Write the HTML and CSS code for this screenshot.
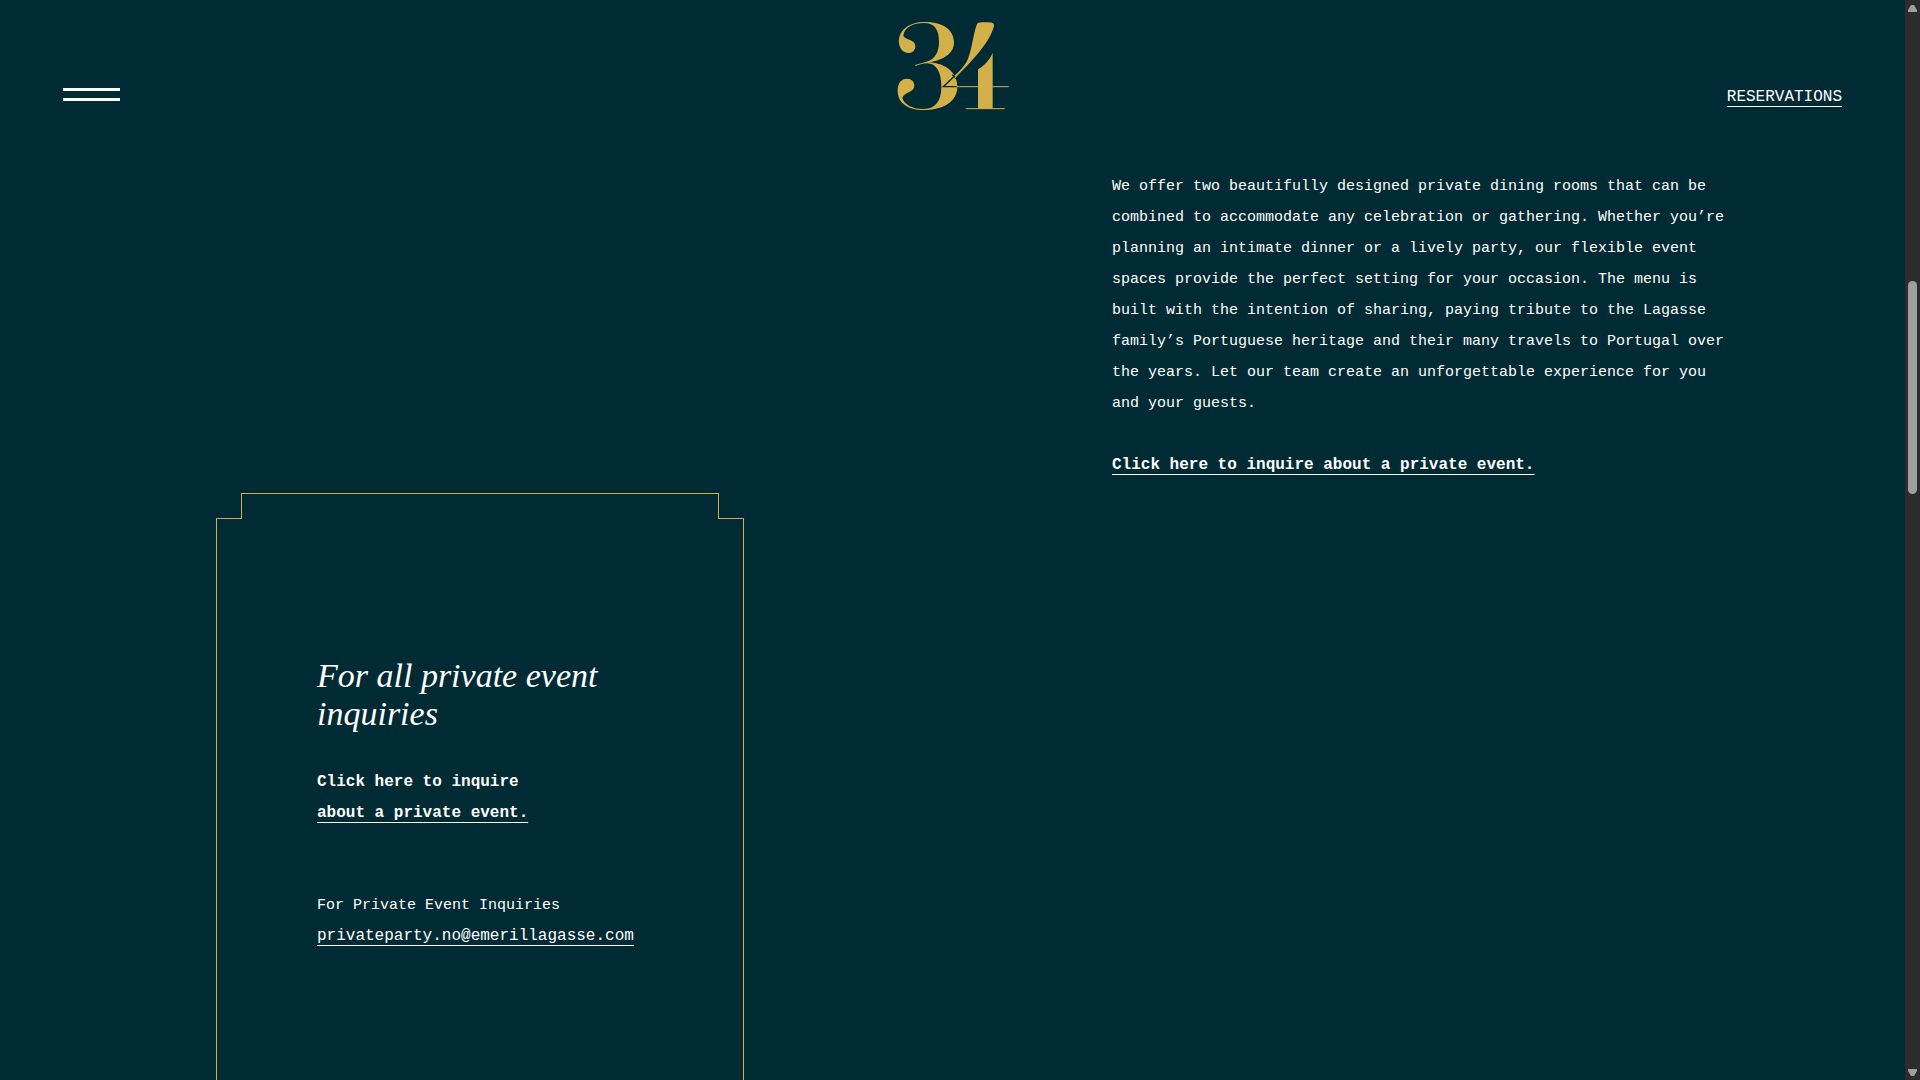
FILE: index.html
```html
<!DOCTYPE html>
<html lang="en">
<head>
    <meta charset="UTF-8">
    <meta name="viewport" content="width=device-width, initial-scale=1.0">
    <title>Private Events</title>
    <link rel="stylesheet" href="styles.css">
</head>
<body>
    <div class="page">
        <header class="header">
            <button class="menu-button" type="button" aria-label="Menu">
                <span class="menu-line"></span>
                <span class="menu-line"></span>
            </button>
            <a class="logo" href="#" aria-label="Home">
                <svg width="112" height="91" viewBox="51 30 336 273">
                    <!-- figure three -->
                    <path class="gold" d="M57 100C53 60 90 36 132 36C188 36 222 58 222 98C222 130 190 150 146 157C200 160 232 190 232 230C232 275 190 300 128 300C85 300 53 280 53 243C53 220 62 206 82 206C95 206 103 215 103 227C103 247 72 246 67 264C72 282 95 297 128 297C165 297 184 275 184 230C184 185 168 160 142 160C129 160 118 164 106 168L105 165L140 155C165 147 177 127 177 95C177 60 165 39 132 39C100 39 72 52 70 78C76 90 106 88 106 108C106 122 96 129 86 129C68 129 59 115 57 100Z"/>
                    <!-- figure four -->
                    <path class="cut" d="M226 196L190 230H232"/>
                    <path class="gold" d="M290 45C292 37 300 37 318 37C338 37 343 39 342 48C334 84 300 126 264 164L226 203L222 199C240 182 257 164 264 146C277 112 279 75 290 45Z"/>
                    <path class="cut" d="M217 194L231 208"/>
                    <path class="hairline" d="M230 199L218 210"/>
                    <path class="gold" d="M294 178C315 165 330 148 338 128V296H294Z"/>
                    <path class="hairline" d="M230 230H386M257 296H374"/>
                </svg>
            </a>
            <a class="link reservations" href="#">RESERVATIONS</a>
        </header>

        <main class="events">
            <section class="card">
                <div class="card-cap"></div>
                <div class="card-body">
                    <h2>For all private event inquiries</h2>
                    <p class="card-link"><a class="strong" href="#">Click here to inquire<br><span class="link">about a private event.</span></a></p>
                    <p>For Private Event Inquiries</p>
                    <p><a class="link" href="mailto:privateparty.no@emerillagasse.com">privateparty.no@emerillagasse.com</a></p>
                </div>
            </section>
            <section class="intro">
                <p>We offer two beautifully designed private dining rooms that can be combined to accommodate any celebration or gathering. Whether you’re planning an intimate dinner or a lively party, our flexible event spaces provide the perfect setting for your occasion. The menu is built with the intention of sharing, paying tribute to the Lagasse family’s Portuguese heritage and their many travels to Portugal over the years. Let our team create an unforgettable experience for you and your guests.</p>
                <p><a class="link strong" href="#">Click here to inquire about a private event.</a></p>
            </section>
        </main>
    </div>

    <div class="scrollbar">
        <svg width="9" height="7" viewBox="0 0 9 7"><path d="M3 0H6L9 5V7H0V5Z"/></svg>
        <div class="thumb"></div>
        <svg width="9" height="7" viewBox="0 0 9 7"><path d="M0 0H9V2L6 7H3L0 2Z"/></svg>
    </div>
</body>
</html>
```

FILE: styles.css
```css
* {
    box-sizing: border-box;
}
body {
    margin: 0;
    height: 100vh;
    display: flex;
    overflow: hidden;
    background-color: #002b34;
    color: #fff;
    font-family: "Liberation Mono", "Courier New", monospace;
    font-size: 15px;
    line-height: 31px;
}
h2, p {
    margin: 0;
}
a {
    color: inherit;
    font-size: 16px;
    text-decoration: none;
}
.link {
    text-decoration: underline;
    text-decoration-thickness: 1px;
    text-decoration-skip-ink: none;
    text-underline-offset: 5px;
}
.strong {
    font-weight: bold;
}
.page {
    flex: 1;
    min-width: 0;
}

/* Header */
.header {
    display: grid;
    grid-template-columns: 1fr auto 1fr;
    align-items: end;
    height: 111px;
    padding: 0 63px;
}
.menu-button {
    display: flex;
    flex-direction: column;
    gap: 7px;
    width: 57px;
    padding: 0;
    margin-bottom: 10px;
    border: 0;
    background: none;
    cursor: pointer;
}
.menu-line {
    width: 100%;
    height: 3px;
    background-color: #fff;
}
.logo svg {
    display: block;
}
.reservations {
    justify-self: end;
    margin-bottom: -2px;
}
.gold {
    fill: #d3b04a;
}
.cut {
    fill: none;
    stroke: #002b34;
    stroke-width: 4;
}
.hairline {
    fill: none;
    stroke: #d3b04a;
    stroke-width: 3;
}

/* Private events */
.events {
    display: flex;
    align-items: flex-start;
    gap: 368px;
    padding: 60px 170px 0 216px;
}
.card {
    flex: none;
    width: 528px;
    margin-top: 322px;
}
.card-cap {
    position: relative;
    height: 26px;
    margin: 0 25px -1px;
    border: 1px solid #d4af42;
    border-bottom: 0;
    background-color: #002b34;
}
.card-body {
    padding: 138px 100px;
    border: 1px solid #d4af42;
}
.card h2 {
    margin-bottom: 34px;
    font-family: "Liberation Serif", "Times New Roman", serif;
    font-size: 34px;
    font-style: italic;
    font-weight: normal;
    line-height: 38px;
}
.card-link {
    margin-bottom: 61px;
}
.intro {
    flex: 1;
}
.intro p {
    margin-bottom: 31px;
}

/* Scrollbar */
.scrollbar {
    display: flex;
    flex-direction: column;
    align-items: center;
    width: 15px;
    padding: 5px 0 4px;
    background-color: #2c2c2c;
}
.scrollbar path {
    fill: #9f9f9f;
}
.thumb {
    width: 9px;
    height: 213px;
    margin: 269px 0 auto;
    border-radius: 5px;
    background-color: #9f9f9f;
}
```
